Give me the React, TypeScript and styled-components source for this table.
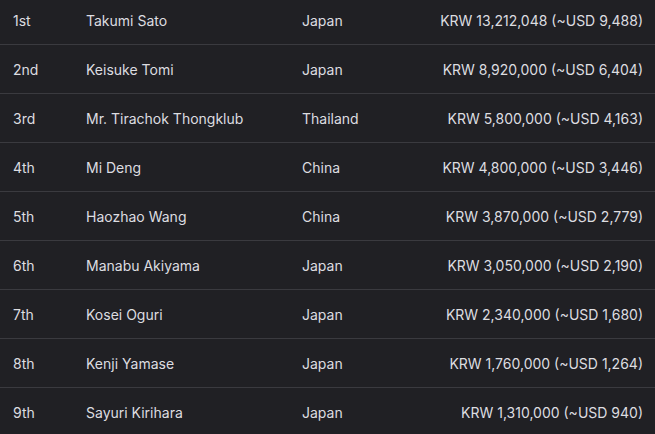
import styled, { createGlobalStyle } from "styled-components";

const GlobalStyle = createGlobalStyle`
  html, body {
    margin: 0;
    padding: 0;
    background: #202024;
    overflow: hidden;
  }
`;

const Table = styled.div`
  margin-top: -4px;
  width: 655px;
  font-family: Inter, "Liberation Sans", sans-serif;
  font-size: 14px;
  color: #dddde0;
  background: #202024;
`;

const Row = styled.div`
  display: grid;
  grid-template-columns: 73px 216px 1fr auto;
  align-items: center;
  height: 48px;
  padding: 0 12px 0 13px;
  border-bottom: 1px solid #3a3a3f;

  &:last-child {
    border-bottom: none;
  }
`;

const Cell = styled.div<{ $align?: "left" | "right" }>`
  text-align: ${(p) => p.$align ?? "left"};
  white-space: nowrap;
`;

type Winner = {
  place: string;
  name: string;
  country: string;
  krw: string;
  usd: string;
};

const winners: Winner[] = [
  { place: "1st", name: "Takumi Sato", country: "Japan", krw: "13,212,048", usd: "9,488" },
  { place: "2nd", name: "Keisuke Tomi", country: "Japan", krw: "8,920,000", usd: "6,404" },
  { place: "3rd", name: "Mr. Tirachok Thongklub", country: "Thailand", krw: "5,800,000", usd: "4,163" },
  { place: "4th", name: "Mi Deng", country: "China", krw: "4,800,000", usd: "3,446" },
  { place: "5th", name: "Haozhao Wang", country: "China", krw: "3,870,000", usd: "2,779" },
  { place: "6th", name: "Manabu Akiyama", country: "Japan", krw: "3,050,000", usd: "2,190" },
  { place: "7th", name: "Kosei Oguri", country: "Japan", krw: "2,340,000", usd: "1,680" },
  { place: "8th", name: "Kenji Yamase", country: "Japan", krw: "1,760,000", usd: "1,264" },
  { place: "9th", name: "Sayuri Kirihara", country: "Japan", krw: "1,310,000", usd: "940" },
];

export default function App() {
  return (
    <>
      <GlobalStyle />
      <Table>
        {winners.map((w) => (
          <Row key={w.place}>
            <Cell>{w.place}</Cell>
            <Cell>{w.name}</Cell>
            <Cell>{w.country}</Cell>
            <Cell $align="right">
              KRW {w.krw} (~USD {w.usd})
            </Cell>
          </Row>
        ))}
      </Table>
    </>
  );
}
